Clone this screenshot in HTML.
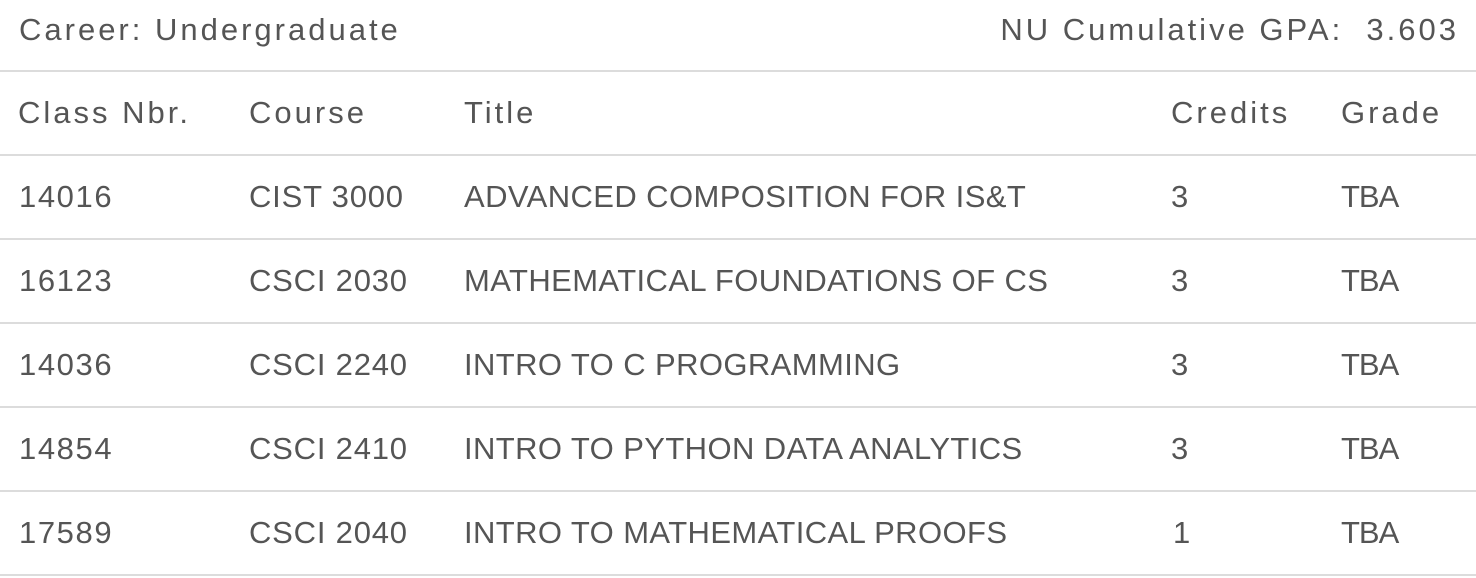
<!DOCTYPE html>
<html><head><meta charset="utf-8"><style>
html,body{margin:0;padding:0;background:#fff;}
body{width:1476px;height:578px;position:relative;overflow:hidden;font-family:"Liberation Sans",sans-serif;color:#555;}
.t{position:absolute;white-space:nowrap;font-size:31px;line-height:36px;}
.h{letter-spacing:3px;font-size:31px;}
.n{letter-spacing:1.6px;}
.c{letter-spacing:0.8px;}
.ti{letter-spacing:0.4px;}
.g{font-size:31px;letter-spacing:-1px;}
.l{position:absolute;left:0;width:1476px;height:2px;background:#dcdcdc;}
</style></head><body>
<div class="t h" style="left:19px;top:12px">Career: Undergraduate</div>
<div class="t h" style="right:17px;top:12px">NU Cumulative GPA:&nbsp; 3.603</div>
<div class="l" style="top:70px"></div>
<div class="t h" style="left:18px;top:95px">Class Nbr.</div>
<div class="t h" style="left:249px;top:95px">Course</div>
<div class="t h" style="left:464px;top:95px">Title</div>
<div class="t h" style="left:1171px;top:95px">Credits</div>
<div class="t h" style="left:1341px;top:95px">Grade</div>
<div class="l" style="top:154px"></div>

<div class="t n" style="left:19px;top:179px">14016</div>
<div class="t c" style="left:249px;top:179px">CIST 3000</div>
<div class="t ti" style="left:464px;top:179px">ADVANCED COMPOSITION FOR IS&amp;T</div>
<div class="t" style="left:1171px;top:179px">3</div>
<div class="t g" style="left:1341px;top:179px">TBA</div>
<div class="l" style="top:238px"></div>

<div class="t n" style="left:19px;top:263px">16123</div>
<div class="t c" style="left:249px;top:263px">CSCI 2030</div>
<div class="t ti" style="left:464px;top:263px">MATHEMATICAL FOUNDATIONS OF CS</div>
<div class="t" style="left:1171px;top:263px">3</div>
<div class="t g" style="left:1341px;top:263px">TBA</div>
<div class="l" style="top:322px"></div>

<div class="t n" style="left:19px;top:347px">14036</div>
<div class="t c" style="left:249px;top:347px">CSCI 2240</div>
<div class="t ti" style="left:464px;top:347px">INTRO TO C PROGRAMMING</div>
<div class="t" style="left:1171px;top:347px">3</div>
<div class="t g" style="left:1341px;top:347px">TBA</div>
<div class="l" style="top:406px"></div>

<div class="t n" style="left:19px;top:431px">14854</div>
<div class="t c" style="left:249px;top:431px">CSCI 2410</div>
<div class="t ti" style="left:464px;top:431px">INTRO TO PYTHON DATA ANALYTICS</div>
<div class="t" style="left:1171px;top:431px">3</div>
<div class="t g" style="left:1341px;top:431px">TBA</div>
<div class="l" style="top:490px"></div>

<div class="t n" style="left:19px;top:515px">17589</div>
<div class="t c" style="left:249px;top:515px">CSCI 2040</div>
<div class="t ti" style="left:464px;top:515px">INTRO TO MATHEMATICAL PROOFS</div>
<div class="t" style="left:1173px;top:515px">1</div>
<div class="t g" style="left:1341px;top:515px">TBA</div>
<div class="l" style="top:574px"></div>
</body></html>
